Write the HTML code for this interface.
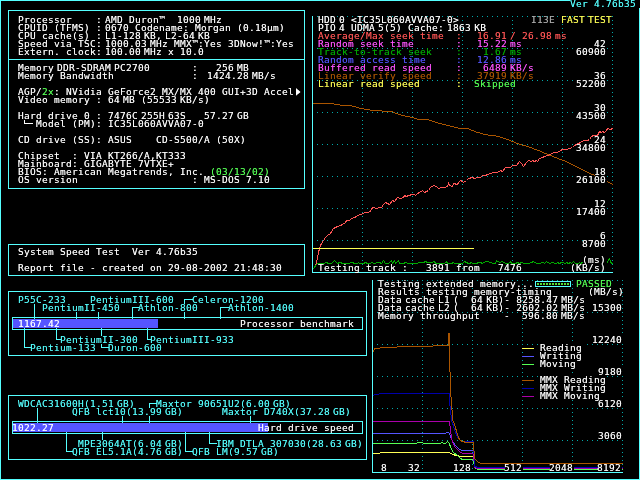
<!DOCTYPE html>
<html lang="en"><head><meta charset="utf-8"><title>System Speed Test 4.76b35</title>
<style>
html,body{margin:0;padding:0;background:#000;overflow:hidden}
#s{position:relative;width:640px;height:480px;overflow:hidden;background:#000;color:#fff;will-change:transform;font-family:"DejaVu Sans Mono","Liberation Mono",monospace;font-size:9.5px;line-height:8px;letter-spacing:0.281px}
#s svg{position:absolute;left:0;top:0}
.t{position:absolute;white-space:pre;height:8px;margin:0}
.t i{font-style:normal;letter-spacing:-2.719px}
.c0{color:#00aa00;text-shadow:0 0 0 rgba(0,170,0,0.6)}
.c1{color:#5555ff;text-shadow:0 0 0 rgba(85,85,255,0.6)}
.c2{color:#55ff55;text-shadow:0 0 0 rgba(85,255,85,0.6)}
.c3{color:#55ffff;text-shadow:0 0 0 rgba(85,255,255,0.6)}
.c4{color:#aa5500;text-shadow:0 0 0 rgba(170,85,0,0.6)}
.c5{color:#aaaaaa;text-shadow:0 0 0 rgba(170,170,170,0.6)}
.c6{color:#ff5555;text-shadow:0 0 0 rgba(255,85,85,0.6)}
.c7{color:#ff55ff;text-shadow:0 0 0 rgba(255,85,255,0.6)}
.c8{color:#ffff55;text-shadow:0 0 0 rgba(255,255,85,0.6)}
.c9{color:#ffffff;text-shadow:0 0 0 rgba(255,255,255,0.6)}
</style></head><body>
<div id="s">
<svg width="640" height="480" viewBox="0 0 640 480" shape-rendering="crispEdges">
<rect x="0" y="0" width="1" height="480" fill="#55ffff"/>
<rect x="0" y="0" width="570" height="1" fill="#55ffff"/>
<rect x="639" y="8" width="1" height="472" fill="#55ffff"/>
<rect x="0" y="479" width="640" height="1" fill="#55ffff"/>
<rect x="8.5" y="10.5" width="296" height="178" fill="none" stroke="#55ffff"/>
<rect x="8" y="59" width="297" height="1" fill="#55ffff"/>
<rect x="8.5" y="244.5" width="296" height="31" fill="none" stroke="#55ffff"/>
<rect x="8.5" y="291.5" width="358" height="64" fill="none" stroke="#55ffff"/>
<rect x="8.5" y="395.5" width="358" height="64" fill="none" stroke="#55ffff"/>
<line x1="317" x2="613" y1="16.5" y2="16.5" stroke="#00aaaa" stroke-dasharray="1 4"/>
<line x1="317" x2="613" y1="48.5" y2="48.5" stroke="#00aaaa" stroke-dasharray="1 4"/>
<line x1="317" x2="613" y1="80.5" y2="80.5" stroke="#00aaaa" stroke-dasharray="1 4"/>
<line x1="317" x2="613" y1="112.5" y2="112.5" stroke="#00aaaa" stroke-dasharray="1 4"/>
<line x1="317" x2="613" y1="144.5" y2="144.5" stroke="#00aaaa" stroke-dasharray="1 4"/>
<line x1="317" x2="613" y1="176.5" y2="176.5" stroke="#00aaaa" stroke-dasharray="1 4"/>
<line x1="317" x2="613" y1="208.5" y2="208.5" stroke="#00aaaa" stroke-dasharray="1 4"/>
<line x1="317" x2="613" y1="240.5" y2="240.5" stroke="#00aaaa" stroke-dasharray="1 4"/>
<line x1="362.5" x2="362.5" y1="16" y2="269" stroke="#00aaaa" stroke-dasharray="1 3"/>
<line x1="412.5" x2="412.5" y1="16" y2="269" stroke="#00aaaa" stroke-dasharray="1 3"/>
<line x1="462.5" x2="462.5" y1="16" y2="269" stroke="#00aaaa" stroke-dasharray="1 3"/>
<line x1="512.5" x2="512.5" y1="16" y2="269" stroke="#00aaaa" stroke-dasharray="1 3"/>
<line x1="562.5" x2="562.5" y1="16" y2="269" stroke="#00aaaa" stroke-dasharray="1 3"/>
<line x1="612.5" x2="612.5" y1="16" y2="269" stroke="#00aaaa" stroke-dasharray="1 3"/>
<rect x="312" y="16" width="1" height="257" fill="#55ffff"/>
<rect x="312" y="272" width="301" height="1" fill="#55ffff"/>
<line x1="377" x2="623" y1="280.5" y2="280.5" stroke="#00aaaa" stroke-dasharray="1 4"/>
<line x1="377" x2="623" y1="312.5" y2="312.5" stroke="#00aaaa" stroke-dasharray="1 4"/>
<line x1="377" x2="623" y1="344.5" y2="344.5" stroke="#00aaaa" stroke-dasharray="1 4"/>
<line x1="377" x2="623" y1="376.5" y2="376.5" stroke="#00aaaa" stroke-dasharray="1 4"/>
<line x1="377" x2="623" y1="408.5" y2="408.5" stroke="#00aaaa" stroke-dasharray="1 4"/>
<line x1="377" x2="623" y1="440.5" y2="440.5" stroke="#00aaaa" stroke-dasharray="1 4"/>
<line x1="422.5" x2="422.5" y1="280" y2="469" stroke="#00aaaa" stroke-dasharray="1 3"/>
<line x1="472.5" x2="472.5" y1="280" y2="469" stroke="#00aaaa" stroke-dasharray="1 3"/>
<line x1="522.5" x2="522.5" y1="280" y2="469" stroke="#00aaaa" stroke-dasharray="1 3"/>
<line x1="572.5" x2="572.5" y1="280" y2="469" stroke="#00aaaa" stroke-dasharray="1 3"/>
<line x1="622.5" x2="622.5" y1="280" y2="469" stroke="#00aaaa" stroke-dasharray="1 3"/>
<rect x="372" y="280" width="1" height="193" fill="#55ffff"/>
<rect x="372" y="472" width="251" height="1" fill="#55ffff"/>
<polyline points="313.5,103.5 333.5,103.5 334.5,104.5 339.5,104.5 340.5,105.5 351.5,105.5 352.5,106.5 355.5,106.5 356.5,107.5 358.5,107.5 359.5,108.5 363.5,108.5 364.5,109.5 369.5,109.5 370.5,110.5 381.5,110.5 382.5,111.5 392.5,111.5 393.5,112.5 394.5,112.5 395.5,113.5 397.5,113.5 398.5,114.5 400.5,114.5 401.5,115.5 404.5,115.5 405.5,116.5 409.5,116.5 410.5,117.5 413.5,117.5 414.5,118.5 416.5,118.5 417.5,119.5 428.5,119.5 429.5,120.5 431.5,120.5 432.5,121.5 434.5,121.5 435.5,122.5 437.5,122.5 438.5,123.5 441.5,123.5 442.5,124.5 445.5,124.5 446.5,125.5 449.5,125.5 450.5,126.5 453.5,126.5 454.5,127.5 457.5,127.5 458.5,128.5 468.5,128.5 469.5,129.5 470.5,129.5 471.5,130.5 473.5,130.5 474.5,131.5 475.5,131.5 476.5,132.5 479.5,132.5 480.5,133.5 482.5,133.5 483.5,134.5 487.5,134.5 488.5,135.5 495.5,135.5 496.5,136.5 499.5,136.5 500.5,137.5 502.5,137.5 503.5,138.5 505.5,138.5 506.5,139.5 508.5,139.5 509.5,140.5 510.5,140.5 511.5,141.5 513.5,141.5 514.5,142.5 515.5,142.5 516.5,143.5 518.5,143.5 519.5,144.5 521.5,144.5 522.5,145.5 525.5,145.5 526.5,146.5 528.5,146.5 529.5,147.5 531.5,147.5 532.5,148.5 533.5,148.5 534.5,149.5 536.5,149.5 537.5,150.5 539.5,150.5 540.5,151.5 541.5,151.5 542.5,152.5 543.5,152.5 544.5,153.5 546.5,153.5 547.5,154.5 548.5,154.5 549.5,155.5 551.5,155.5 552.5,156.5 553.5,156.5 554.5,157.5 556.5,157.5 557.5,158.5 558.5,158.5 559.5,159.5 561.5,159.5 562.5,160.5 564.5,160.5 565.5,161.5 566.5,161.5 567.5,162.5 568.5,162.5 569.5,163.5 570.5,163.5 571.5,164.5 572.5,164.5 573.5,165.5 574.5,165.5 575.5,166.5 576.5,166.5 577.5,167.5 578.5,167.5 579.5,168.5 580.5,168.5 581.5,169.5 582.5,169.5 583.5,170.5 584.5,170.5 585.5,171.5 586.5,171.5 587.5,172.5 588.5,172.5 589.5,173.5 590.5,173.5 591.5,174.5 593.5,174.5 594.5,175.5 595.5,175.5 596.5,176.5 597.5,176.5 598.5,177.5 599.5,177.5 600.5,178.5 601.5,178.5 602.5,179.5 603.5,179.5 604.5,180.5 605.5,180.5 606.5,181.5 607.5,181.5 608.5,182.5 609.5,182.5 610.5,183.5 611.5,183.5 612.5,184.5 612.5,184.5" fill="none" stroke="#aa5500" stroke-width="1" stroke-linecap="square"/>
<polyline points="313.5,268.5 315.5,266.5 316.5,262.5 317.5,257.5 318.5,252.5 319.5,248.5 320.5,245.5 321.5,243.5 323.5,240.5 325.5,237.5 327.5,235.5 330.5,233.5 331.5,231.5 333.5,228.5 335.5,227.5 337.5,226.5 340.5,225.5 342.5,224.5 345.5,222.5 346.5,220.5 349.5,220.5 351.5,218.5 354.5,217.5 356.5,216.5 359.5,214.5 361.5,214.5 364.5,212.5 367.5,212.5 370.5,211.5 371.5,208.5 373.5,207.5 376.5,208.5 379.5,207.5 381.5,207.5 383.5,204.5 385.5,202.5 387.5,203.5 389.5,204.5 392.5,200.5 394.5,201.5 397.5,197.5 400.5,198.5 403.5,197.5 404.5,195.5 406.5,196.5 408.5,195.5 412.5,194.5 414.5,194.5 415.5,195.5 417.5,193.5 419.5,192.5 422.5,190.5 424.5,192.5 426.5,191.5 428.5,190.5 430.5,187.5 433.5,185.5 436.5,186.5 438.5,188.5 441.5,187.5 444.5,187.5 447.5,186.5 448.5,183.5 449.5,185.5 452.5,186.5 453.5,183.5 457.5,184.5 458.5,182.5 460.5,180.5 462.5,181.5 463.5,182.5 466.5,180.5 468.5,178.5 472.5,177.5 474.5,178.5 477.5,177.5 480.5,177.5 482.5,175.5 485.5,175.5 487.5,174.5 490.5,173.5 493.5,172.5 497.5,172.5 500.5,170.5 502.5,171.5 505.5,167.5 507.5,167.5 510.5,167.5 512.5,165.5 516.5,165.5 519.5,161.5 521.5,163.5 523.5,166.5 526.5,162.5 528.5,160.5 531.5,161.5 532.5,160.5 534.5,161.5 536.5,160.5 537.5,161.5 539.5,158.5 542.5,157.5 544.5,156.5 547.5,155.5 550.5,154.5 553.5,152.5 557.5,152.5 560.5,150.5 562.5,149.5 566.5,149.5 569.5,148.5 572.5,147.5 574.5,145.5 576.5,144.5 580.5,142.5 583.5,140.5 587.5,140.5 589.5,139.5 591.5,136.5 593.5,135.5 597.5,135.5 599.5,131.5 601.5,132.5 602.5,131.5 604.5,132.5 606.5,130.5 607.5,128.5 610.5,129.5 612.5,128.5" fill="none" stroke="#ff5555" stroke-width="1" stroke-linecap="square"/>
<rect x="313" y="248" width="161" height="1" fill="#ffff55"/>
<polyline points="313.5,268.5 314.5,267.5 315.5,265.5 316.5,264.5 317.5,263.5 318.5,263.5 321.5,263.5 323.5,263.5 326.5,262.5 328.5,263.5 330.5,263.5 331.5,263.5 334.5,260.5 336.5,262.5 337.5,263.5 339.5,262.5 340.5,262.5 342.5,263.5 344.5,263.5 346.5,263.5 347.5,263.5 349.5,263.5 350.5,262.5 352.5,262.5 354.5,263.5 355.5,263.5 357.5,263.5 358.5,262.5 359.5,263.5 360.5,263.5 363.5,263.5 365.5,262.5 367.5,263.5 369.5,263.5 372.5,262.5 373.5,263.5 374.5,263.5 377.5,262.5 379.5,262.5 381.5,263.5 383.5,260.5 385.5,263.5 388.5,263.5 391.5,260.5 392.5,263.5 394.5,260.5 395.5,263.5 398.5,260.5 399.5,263.5 401.5,263.5 403.5,263.5 405.5,262.5 408.5,263.5 409.5,263.5 411.5,263.5 413.5,263.5 416.5,263.5 419.5,262.5 421.5,262.5 423.5,262.5 425.5,261.5 427.5,262.5 429.5,262.5 431.5,262.5 434.5,261.5 435.5,263.5 436.5,263.5 438.5,263.5 441.5,263.5 444.5,263.5 446.5,261.5 447.5,263.5 450.5,263.5 451.5,263.5 453.5,262.5 454.5,263.5 457.5,263.5 458.5,263.5 460.5,263.5 462.5,263.5 464.5,261.5 466.5,262.5 468.5,263.5 469.5,263.5 471.5,262.5 472.5,263.5 473.5,263.5 475.5,263.5 476.5,263.5 478.5,262.5 480.5,262.5 482.5,263.5 485.5,261.5 488.5,261.5 489.5,262.5 490.5,262.5 493.5,263.5 494.5,263.5 495.5,263.5 496.5,260.5 499.5,262.5 502.5,261.5 505.5,263.5 506.5,263.5 507.5,263.5 508.5,263.5 510.5,261.5 511.5,263.5 514.5,263.5 515.5,263.5 517.5,262.5 519.5,263.5 521.5,262.5 524.5,263.5 526.5,263.5 528.5,263.5 531.5,262.5 533.5,261.5 536.5,263.5 538.5,263.5 540.5,263.5 541.5,262.5 543.5,262.5 544.5,263.5 546.5,261.5 549.5,263.5 552.5,262.5 555.5,263.5 556.5,263.5 557.5,262.5 559.5,263.5 561.5,262.5 562.5,262.5 565.5,263.5 566.5,262.5 568.5,263.5 570.5,262.5 571.5,263.5 573.5,261.5 575.5,263.5 578.5,263.5 579.5,262.5 580.5,263.5 582.5,262.5 584.5,263.5 586.5,263.5 589.5,263.5 592.5,263.5 593.5,263.5 595.5,263.5 597.5,263.5 598.5,263.5 601.5,260.5 603.5,263.5 605.5,263.5 606.5,263.5 607.5,262.5 608.5,259.5 609.5,258.5 610.5,261.5 611.5,263.5 612.5,263.5" fill="none" stroke="#00aa00" stroke-width="1" stroke-linecap="square"/>
<polyline points="373.5,453.5 379.5,453.5 380.5,452.5 449.5,452.5 452.5,454.5 456.5,455.5 460.5,456.5 473.5,456.5 474.5,467.5 477.5,469.5 622.5,469.5" fill="none" stroke="#ffff55" stroke-width="1" stroke-linecap="square"/>
<polyline points="373.5,443.5 416.5,443.5 417.5,442.5 422.5,442.5 423.5,443.5 440.5,443.5 441.5,442.5 442.5,442.5 443.5,443.5 445.5,443.5 446.5,442.5 447.5,441.5 448.5,442.5 449.5,443.5 450.5,447.5 453.5,452.5 457.5,455.5 460.5,458.5 462.5,459.5 473.5,459.5 474.5,467.5 477.5,469.5 622.5,469.5" fill="none" stroke="#55ff55" stroke-width="1" stroke-linecap="square"/>
<polyline points="373.5,433.5 445.5,433.5 446.5,432.5 448.5,432.5 449.5,433.5 450.5,436.5 452.5,441.5 455.5,445.5 458.5,448.5 461.5,450.5 473.5,450.5 474.5,466.5 477.5,467.5 622.5,467.5" fill="none" stroke="#5555ff" stroke-width="1" stroke-linecap="square"/>
<polyline points="373.5,421.5 449.5,421.5 450.5,430.5 451.5,436.5 452.5,442.5 455.5,447.5 459.5,451.5 462.5,453.5 473.5,453.5 474.5,467.5 477.5,468.5 622.5,468.5" fill="none" stroke="#aa00aa" stroke-width="1" stroke-linecap="square"/>
<polyline points="373.5,395.5 374.5,394.5 378.5,394.5 379.5,393.5 449.5,393.5 449.5,405.5 450.5,406.5 450.5,414.5 451.5,415.5 451.5,421.5 452.5,422.5 453.5,426.5 454.5,429.5 455.5,432.5 456.5,434.5 457.5,436.5 458.5,438.5 459.5,439.5 460.5,440.5 461.5,441.5 473.5,441.5 474.5,466.5 478.5,467.5 622.5,467.5" fill="none" stroke="#0000aa" stroke-width="1" stroke-linecap="square"/>
<polyline points="373.5,351.5 374.5,348.5 379.5,348.5 380.5,347.5 396.5,347.5 397.5,346.5 432.5,346.5 433.5,345.5 448.5,345.5 448.5,333.5 449.5,333.5 449.5,371.5 450.5,372.5 450.5,396.5 451.5,397.5 451.5,409.5 452.5,410.5 452.5,420.5 453.5,421.5 454.5,424.5 455.5,427.5 456.5,431.5 457.5,434.5 458.5,437.5 459.5,439.5 460.5,440.5 462.5,441.5 466.5,442.5 473.5,442.5 474.5,458.5 477.5,461.5 480.5,463.5 622.5,463.5" fill="none" stroke="#aa5500" stroke-width="1" stroke-linecap="square"/>
<rect x="522" y="348" width="12" height="1" fill="#ffff55"/>
<rect x="522" y="356" width="12" height="1" fill="#5555ff"/>
<rect x="522" y="364" width="12" height="1" fill="#55ff55"/>
<rect x="522" y="380" width="12" height="1" fill="#aa5500"/>
<rect x="522" y="388" width="12" height="1" fill="#0000aa"/>
<rect x="522" y="396" width="12" height="1" fill="#aa00aa"/>
<rect x="535.5" y="281.5" width="35" height="5" fill="none" stroke="#55ffff"/>
<rect x="537" y="283" width="2" height="2" fill="#55dd33"/>
<rect x="540" y="283" width="2" height="2" fill="#55dd33"/>
<rect x="543" y="283" width="2" height="2" fill="#55dd33"/>
<rect x="546" y="283" width="2" height="2" fill="#55dd33"/>
<rect x="549" y="283" width="2" height="2" fill="#55dd33"/>
<rect x="552" y="283" width="2" height="2" fill="#55dd33"/>
<rect x="555" y="283" width="2" height="2" fill="#55dd33"/>
<rect x="558" y="283" width="2" height="2" fill="#55dd33"/>
<rect x="561" y="283" width="2" height="2" fill="#55dd33"/>
<rect x="564" y="283" width="2" height="2" fill="#55dd33"/>
<rect x="567" y="283" width="2" height="2" fill="#55dd33"/>
<rect x="12.5" y="317.5" width="350" height="12" fill="none" stroke="#55ffff"/>
<rect x="13" y="319" width="145" height="9" fill="#5555ff"/>
<rect x="12.5" y="421.5" width="350" height="12" fill="none" stroke="#55ffff"/>
<rect x="13" y="423" width="255" height="9" fill="#5555ff"/>
<rect x="34" y="304" width="1" height="15" fill="#55ffff"/>
<rect x="76" y="312" width="1" height="7" fill="#55ffff"/>
<rect x="98" y="304" width="1" height="15" fill="#55ffff"/>
<rect x="132" y="307" width="1" height="12" fill="#55ffff"/>
<rect x="132" y="307" width="7" height="1" fill="#55ffff"/>
<rect x="184" y="299" width="1" height="20" fill="#55ffff"/>
<rect x="184" y="299" width="9" height="1" fill="#55ffff"/>
<rect x="220" y="307" width="1" height="12" fill="#55ffff"/>
<rect x="220" y="307" width="9" height="1" fill="#55ffff"/>
<rect x="24" y="328" width="1" height="20" fill="#55ffff"/>
<rect x="24" y="347" width="7" height="1" fill="#55ffff"/>
<rect x="56" y="328" width="1" height="12" fill="#55ffff"/>
<rect x="56" y="339" width="5" height="1" fill="#55ffff"/>
<rect x="101" y="328" width="1" height="20" fill="#55ffff"/>
<rect x="101" y="347" width="8" height="1" fill="#55ffff"/>
<rect x="147" y="328" width="1" height="12" fill="#55ffff"/>
<rect x="147" y="339" width="4" height="1" fill="#55ffff"/>
<rect x="37" y="408" width="1" height="15" fill="#55ffff"/>
<rect x="122" y="416" width="1" height="7" fill="#55ffff"/>
<rect x="149" y="403" width="1" height="20" fill="#55ffff"/>
<rect x="149" y="403" width="8" height="1" fill="#55ffff"/>
<rect x="250" y="416" width="1" height="7" fill="#55ffff"/>
<rect x="66" y="432" width="1" height="20" fill="#55ffff"/>
<rect x="66" y="451" width="7" height="1" fill="#55ffff"/>
<rect x="102" y="432" width="1" height="9" fill="#55ffff"/>
<rect x="185" y="432" width="1" height="20" fill="#55ffff"/>
<rect x="185" y="451" width="8" height="1" fill="#55ffff"/>
<rect x="209" y="432" width="1" height="12" fill="#55ffff"/>
<rect x="209" y="443" width="8" height="1" fill="#55ffff"/>
<rect x="24" y="120" width="1" height="4" fill="#ffffff"/>
<rect x="24" y="123" width="9" height="1" fill="#ffffff"/>
<rect x="595" y="40" width="12" height="8" fill="#000"/>
<rect x="577" y="48" width="30" height="8" fill="#000"/>
<rect x="595" y="72" width="12" height="8" fill="#000"/>
<rect x="577" y="80" width="30" height="8" fill="#000"/>
<rect x="595" y="104" width="12" height="8" fill="#000"/>
<rect x="577" y="112" width="30" height="8" fill="#000"/>
<rect x="595" y="136" width="12" height="8" fill="#000"/>
<rect x="577" y="144" width="30" height="8" fill="#000"/>
<rect x="595" y="168" width="12" height="8" fill="#000"/>
<rect x="577" y="176" width="30" height="8" fill="#000"/>
<rect x="595" y="200" width="12" height="8" fill="#000"/>
<rect x="577" y="208" width="30" height="8" fill="#000"/>
<rect x="601" y="232" width="6" height="8" fill="#000"/>
<rect x="583" y="240" width="24" height="8" fill="#000"/>
<rect x="583" y="256" width="24" height="8" fill="#000"/>
<rect x="571" y="264" width="36" height="8" fill="#000"/>
<rect x="593" y="336" width="30" height="8" fill="#000"/>
<rect x="599" y="368" width="24" height="8" fill="#000"/>
<rect x="599" y="400" width="24" height="8" fill="#000"/>
<rect x="599" y="432" width="24" height="8" fill="#000"/>
<rect x="382" y="464" width="6" height="8" fill="#000"/>
<rect x="409" y="464" width="12" height="8" fill="#000"/>
<rect x="454" y="464" width="18" height="8" fill="#000"/>
<rect x="505" y="464" width="18" height="8" fill="#000"/>
<rect x="550" y="464" width="24" height="8" fill="#000"/>
<rect x="598" y="464" width="24" height="8" fill="#000"/>
<rect x="541" y="344" width="42" height="8" fill="#000"/>
<rect x="541" y="352" width="42" height="8" fill="#000"/>
<rect x="541" y="360" width="36" height="8" fill="#000"/>
<rect x="541" y="376" width="66" height="8" fill="#000"/>
<rect x="541" y="384" width="66" height="8" fill="#000"/>
<rect x="541" y="392" width="60" height="8" fill="#000"/>
<rect x="19" y="296" width="48" height="8" fill="#000"/>
<rect x="91" y="296" width="84" height="8" fill="#000"/>
<rect x="193" y="296" width="72" height="8" fill="#000"/>
<rect x="43" y="304" width="78" height="8" fill="#000"/>
<rect x="139" y="304" width="60" height="8" fill="#000"/>
<rect x="229" y="304" width="66" height="8" fill="#000"/>
<rect x="61" y="336" width="78" height="8" fill="#000"/>
<rect x="151" y="336" width="84" height="8" fill="#000"/>
<rect x="31" y="344" width="66" height="8" fill="#000"/>
<rect x="109" y="344" width="54" height="8" fill="#000"/>
<rect x="19" y="400" width="117" height="8" fill="#000"/>
<rect x="157" y="400" width="135" height="8" fill="#000"/>
<rect x="73" y="408" width="111" height="8" fill="#000"/>
<rect x="223" y="408" width="129" height="8" fill="#000"/>
<rect x="79" y="440" width="105" height="8" fill="#000"/>
<rect x="217" y="440" width="147" height="8" fill="#000"/>
<rect x="73" y="448" width="111" height="8" fill="#000"/>
<rect x="193" y="448" width="87" height="8" fill="#000"/>
</svg>
<div class="t c3" style="left:570px;top:0px">Ver 4.76b35</div>
<div class="t c9" style="left:18px;top:16px">Processor    :</div>
<div class="t c9" style="left:105px;top:16px">AMD Duron™  1000<i> </i>MHz</div>
<div class="t c9" style="left:18px;top:24px">CPUID (TFMS) :</div>
<div class="t c9" style="left:105px;top:24px">0670 Codename: Morgan (0.18µm)</div>
<div class="t c9" style="left:18px;top:32px">CPU cache(s) :</div>
<div class="t c9" style="left:105px;top:32px">L1-128<i> </i>KB,<i> </i>L2-64<i> </i>KB</div>
<div class="t c9" style="left:18px;top:40px">Speed via TSC:</div>
<div class="t c9" style="left:105px;top:40px">1000.03<i> </i>MHz MMX™:Yes 3DNow!™:Yes</div>
<div class="t c9" style="left:18px;top:48px">Extern. clock:</div>
<div class="t c9" style="left:105px;top:48px">100.00<i> </i>MHz x 10.0</div>
<div class="t c9" style="left:18px;top:64px">Memory<i> </i>DDR-SDRAM<i> </i>PC2700</div>
<div class="t c9" style="left:192px;top:64px">:</div>
<div class="t c9" style="left:216px;top:64px">256<i> </i>MB</div>
<div class="t c9" style="left:18px;top:72px">Memory Bandwidth</div>
<div class="t c9" style="left:192px;top:72px">:</div>
<div class="t c9" style="left:207px;top:72px">1424.28<i> </i>MB/s</div>
<div class="t c9" style="left:18px;top:88px">AGP/</div>
<div class="t c2" style="left:42px;top:88px">2x</div>
<div class="t c9" style="left:54px;top:88px">: NVidia GeForce2 MX/MX 400 GUI+3D Accel</div>
<div class="t c9" style="left:296px;top:87px;font-size:12px;transform:scaleX(.6);transform-origin:0 0">▶</div>
<div class="t c9" style="left:18px;top:96px">Video memory : 64<i> </i>MB (55533<i> </i>KB/s)</div>
<div class="t c9" style="left:18px;top:112px">Hard drive 0 : 7476C<i> </i>255H<i> </i>63S   57.27<i> </i>GB</div>
<div class="t c9" style="left:36px;top:120px">Model (PM): IC35L060AVVA07-0</div>
<div class="t c9" style="left:18px;top:136px">CD drive (SS): ASUS    CD-S500/A (50X)</div>
<div class="t c9" style="left:18px;top:152px">Chipset  : VIA KT266/A,KT333</div>
<div class="t c9" style="left:18px;top:160px">Mainboard: GIGABYTE 7VTXE+</div>
<div class="t c9" style="left:18px;top:168px">BIOS: American Megatrends, Inc.</div>
<div class="t c2" style="left:210px;top:168px">(03/13/02)</div>
<div class="t c9" style="left:18px;top:176px">OS version</div>
<div class="t c9" style="left:192px;top:176px">: MS-DOS 7.10</div>
<div class="t c9" style="left:18px;top:248px">System Speed Test  Ver 4.76b35</div>
<div class="t c9" style="left:18px;top:264px">Report file - created on 29-08-2002 21:48:30</div>
<div class="t c9" style="left:318px;top:16px">HDD<i> </i>0 &lt;IC35L060AVVA07-0&gt;</div>
<div class="t c5" style="left:531px;top:16px">I13E</div>
<div class="t c8" style="left:561px;top:16px">FAST<i> </i>TEST</div>
<div class="t c9" style="left:318px;top:24px">PIO<i> </i>4 UDMA<i> </i>5(5) Cache:<i> </i>1863<i> </i>KB</div>
<div class="t c6" style="left:318px;top:32px">Average/Max seek time</div>
<div class="t c6" style="left:456px;top:32px">:</div>
<div class="t c6" style="left:477px;top:32px">16.91<i> </i>/ 26.98<i> </i>ms</div>
<div class="t c7" style="left:318px;top:40px">Random seek time</div>
<div class="t c7" style="left:456px;top:40px">:</div>
<div class="t c7" style="left:477px;top:40px">15.22<i> </i>ms</div>
<div class="t c0" style="left:318px;top:48px">Track-to-track seek</div>
<div class="t c0" style="left:456px;top:48px">:</div>
<div class="t c0" style="left:483px;top:48px">1.67<i> </i>ms</div>
<div class="t c1" style="left:318px;top:56px">Random access time</div>
<div class="t c1" style="left:456px;top:56px">:</div>
<div class="t c1" style="left:477px;top:56px">12.86<i> </i>ms</div>
<div class="t c7" style="left:318px;top:64px">Buffered read speed</div>
<div class="t c7" style="left:456px;top:64px">:</div>
<div class="t c7" style="left:483px;top:64px">6489<i> </i>KB/s</div>
<div class="t c4" style="left:318px;top:72px">Linear verify speed</div>
<div class="t c4" style="left:456px;top:72px">:</div>
<div class="t c4" style="left:477px;top:72px">37919<i> </i>KB/s</div>
<div class="t c8" style="left:318px;top:80px">Linear read speed</div>
<div class="t c8" style="left:456px;top:80px">:</div>
<div class="t c2" style="left:474px;top:80px">Skipped</div>
<div class="t c9" style="left:594px;top:40px">42</div>
<div class="t c9" style="left:576px;top:48px">60900</div>
<div class="t c9" style="left:594px;top:72px">36</div>
<div class="t c9" style="left:576px;top:80px">52200</div>
<div class="t c9" style="left:594px;top:104px">30</div>
<div class="t c9" style="left:576px;top:112px">43500</div>
<div class="t c9" style="left:594px;top:136px">24</div>
<div class="t c9" style="left:576px;top:144px">34800</div>
<div class="t c9" style="left:594px;top:168px">18</div>
<div class="t c9" style="left:576px;top:176px">26100</div>
<div class="t c9" style="left:594px;top:200px">12</div>
<div class="t c9" style="left:576px;top:208px">17400</div>
<div class="t c9" style="left:600px;top:232px">6</div>
<div class="t c9" style="left:582px;top:240px">8700</div>
<div class="t c9" style="left:582px;top:256px">(ms)</div>
<div class="t c9" style="left:570px;top:264px">(KB/s)</div>
<div class="t c9" style="left:318px;top:264px">Testing track :   3891 from   7476</div>
<div class="t c9" style="left:378px;top:280px">Testing extended memory...</div>
<div class="t c2" style="left:576px;top:280px">PASSED</div>
<div class="t c9" style="left:378px;top:288px">Results testing memory-timing</div>
<div class="t c9" style="left:588px;top:288px">(MB/s)</div>
<div class="t c9" style="left:378px;top:296px">Data<i> </i>cache<i> </i>L1<i> </i>(  64<i> </i>KB)- 8258.47<i> </i>MB/s</div>
<div class="t c9" style="left:378px;top:304px">Data<i> </i>cache<i> </i>L2<i> </i>(  64<i> </i>KB)- 2602.02<i> </i>MB/s</div>
<div class="t c9" style="left:592px;top:304px">15300</div>
<div class="t c9" style="left:378px;top:312px">Memory throughput</div>
<div class="t c9" style="left:504px;top:312px">-</div>
<div class="t c9" style="left:522px;top:312px">596.80<i> </i>MB/s</div>
<div class="t c9" style="left:592px;top:336px">12240</div>
<div class="t c9" style="left:598px;top:368px">9180</div>
<div class="t c9" style="left:598px;top:400px">6120</div>
<div class="t c9" style="left:598px;top:432px">3060</div>
<div class="t c9" style="left:381px;top:464px">8</div>
<div class="t c9" style="left:408px;top:464px">32</div>
<div class="t c9" style="left:453px;top:464px">128</div>
<div class="t c9" style="left:504px;top:464px">512</div>
<div class="t c9" style="left:549px;top:464px">2048</div>
<div class="t c9" style="left:597px;top:464px">8192</div>
<div class="t c9" style="left:540px;top:344px">Reading</div>
<div class="t c9" style="left:540px;top:352px">Writing</div>
<div class="t c9" style="left:540px;top:360px">Moving</div>
<div class="t c9" style="left:540px;top:376px">MMX Reading</div>
<div class="t c9" style="left:540px;top:384px">MMX Writing</div>
<div class="t c9" style="left:540px;top:392px">MMX Moving</div>
<div class="t c3" style="left:18px;top:296px">P55C-233</div>
<div class="t c3" style="left:90px;top:296px">PentiumIII-600</div>
<div class="t c3" style="left:192px;top:296px">Celeron-1200</div>
<div class="t c3" style="left:42px;top:304px">PentiumII-450</div>
<div class="t c3" style="left:138px;top:304px">Athlon-800</div>
<div class="t c3" style="left:228px;top:304px">Athlon-1400</div>
<div class="t c9" style="left:18px;top:320px">1167.42</div>
<div class="t c9" style="left:240px;top:320px">Processor benchmark</div>
<div class="t c3" style="left:60px;top:336px">PentiumII-300</div>
<div class="t c3" style="left:150px;top:336px">PentiumIII-933</div>
<div class="t c3" style="left:30px;top:344px">Pentium-133</div>
<div class="t c3" style="left:108px;top:344px">Duron-600</div>
<div class="t c3" style="left:18px;top:400px">WDCAC31600H(1.51<i> </i>GB)</div>
<div class="t c3" style="left:156px;top:400px">Maxtor 90651U2(6.00<i> </i>GB)</div>
<div class="t c3" style="left:72px;top:408px">QFB lct10(13.99<i> </i>GB)</div>
<div class="t c3" style="left:222px;top:408px">Maxtor D740X(37.28<i> </i>GB)</div>
<div class="t c9" style="left:12px;top:424px">1022.27</div>
<div class="t c9" style="left:258px;top:424px">Hard drive speed</div>
<div class="t c3" style="left:78px;top:440px">MPE3064AT(6.04<i> </i>GB)</div>
<div class="t c3" style="left:216px;top:440px">IBM DTLA 307030(28.63<i> </i>GB)</div>
<div class="t c3" style="left:72px;top:448px">QFB EL5.1A(4.76<i> </i>GB)</div>
<div class="t c3" style="left:192px;top:448px">QFB LM(9.57<i> </i>GB)</div>
</div>
</body></html>
